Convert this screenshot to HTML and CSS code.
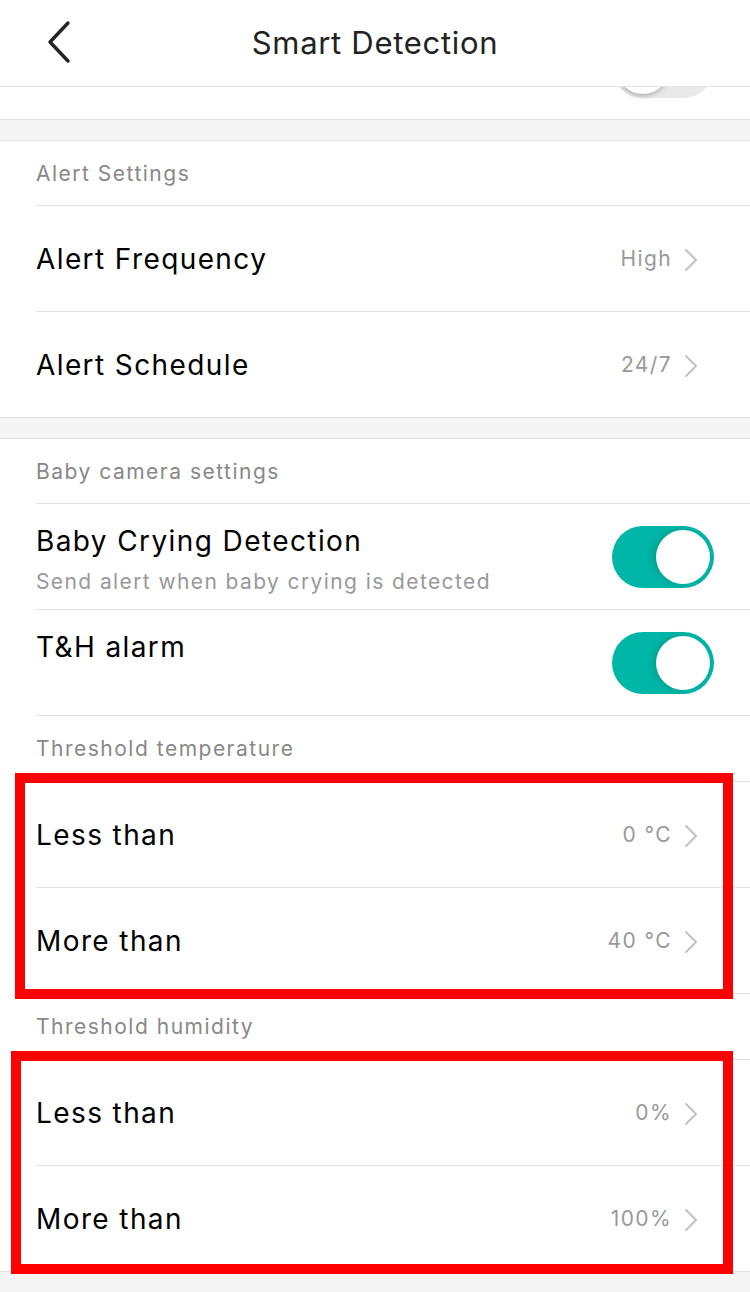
FILE: index.html
```html
<!DOCTYPE html>
<html lang="en">
  <head>
    <meta charset="UTF-8" />
    <meta name="viewport" content="width=device-width, initial-scale=1.0" />
    <title>Smart Detection</title>
    <link rel="stylesheet" href="styles.css">
  </head>
  <body>
    <div class="page">
      <header class="nav">
        <button class="back" aria-label="Back">
          <svg width="28" height="44" viewBox="0 0 28 44">
            <path d="M24 3 L6 22 L24 41" fill="none" stroke="#222" stroke-width="3.4" stroke-linecap="round" stroke-linejoin="round" />
          </svg>
        </button>
        <h1 class="nav-title">Smart Detection</h1>
      </header>

      <div class="cut-row">
        <span class="switch off"><span class="knob"></span></span>
      </div>

      <div class="spacer"></div>

      <section class="group">
        <div class="group-title">Alert Settings</div>
        <div class="item">
          <span class="label">Alert Frequency</span>
          <span class="value">High</span>
          <svg class="chev" width="14" height="24" viewBox="0 0 14 24"><path d="M2 2 L12 12 L2 22" /></svg>
        </div>
        <div class="item">
          <span class="label">Alert Schedule</span>
          <span class="value">24/7</span>
          <svg class="chev" width="14" height="24" viewBox="0 0 14 24"><path d="M2 2 L12 12 L2 22" /></svg>
        </div>
      </section>

      <div class="spacer"></div>

      <section class="group">
        <div class="group-title">Baby camera settings</div>
        <div class="item toggle-item">
          <div class="text">
            <div class="label">Baby Crying Detection</div>
            <div class="desc">Send alert when baby crying is detected</div>
          </div>
          <span class="switch on"><span class="knob"></span></span>
        </div>
        <div class="item toggle-item">
          <div class="text">
            <div class="label">T&amp;H alarm</div>
            <div class="desc"></div>
          </div>
          <span class="switch on"><span class="knob"></span></span>
        </div>

        <div class="group-title sub">Threshold temperature</div>
        <div class="item">
          <span class="label">Less than</span>
          <span class="value">0 °C</span>
          <svg class="chev" width="14" height="24" viewBox="0 0 14 24"><path d="M2 2 L12 12 L2 22" /></svg>
        </div>
        <div class="item">
          <span class="label">More than</span>
          <span class="value">40 °C</span>
          <svg class="chev" width="14" height="24" viewBox="0 0 14 24"><path d="M2 2 L12 12 L2 22" /></svg>
        </div>

        <div class="group-title sub">Threshold humidity</div>
        <div class="item">
          <span class="label">Less than</span>
          <span class="value">0%</span>
          <svg class="chev" width="14" height="24" viewBox="0 0 14 24"><path d="M2 2 L12 12 L2 22" /></svg>
        </div>
        <div class="item">
          <span class="label">More than</span>
          <span class="value">100%</span>
          <svg class="chev" width="14" height="24" viewBox="0 0 14 24"><path d="M2 2 L12 12 L2 22" /></svg>
        </div>
      </section>

      <div class="mark mark-temp"></div>
      <div class="mark mark-hum"></div>
    </div>
  </body>
</html>
```

FILE: styles.css
```css
body {
  margin: 0;
  padding: 0;
  background-color: #f5f5f5;
  font-family: Inter, "Liberation Sans", Arial, sans-serif;
  color: #000;
}

.page {
  position: relative;
  width: 750px;
  min-height: 1292px;
  overflow: hidden;
}

/* top bar */

.nav {
  position: relative;
  z-index: 2;
  height: 86px;
  background-color: white;
  border-bottom: 1px solid #e3e3e3;
  display: flex;
  align-items: center;
  justify-content: center;
}

.back {
  position: absolute;
  left: 44px;
  top: 20px;
  padding: 0;
  border: none;
  background: none;
}

.nav-title {
  margin: 0 0 2px 0;
  font-size: 31px;
  font-weight: 400;
  color: #222;
  letter-spacing: 0.7px;
}

/* the row scrolled under the bar */

.cut-row {
  height: 32px;
  background-color: white;
  border-bottom: 1px solid #e3e3e3;
  display: flex;
  justify-content: flex-end;
  align-items: flex-start;
  padding-right: 36px;
}

.cut-row .switch {
  margin-top: -51px;
}

.spacer {
  height: 20px;
}

/* groups */

.group {
  background-color: white;
  border-top: 1px solid #e3e3e3;
  border-bottom: 1px solid #e3e3e3;
  padding-left: 36px;
}

.group-title {
  height: 64px;
  display: flex;
  align-items: center;
  font-size: 21px;
  color: #888;
  letter-spacing: 1.5px;
}

.group-title.sub {
  height: 65px;
  border-top: 1px solid #e3e3e3;
}

.item {
  height: 105px;
  border-top: 1px solid #e3e3e3;
  display: flex;
  align-items: center;
  padding-right: 52px;
}

.label {
  flex: 1;
  font-size: 28px;
  color: #000;
  letter-spacing: 1.4px;
}

.value {
  font-size: 21px;
  color: #999;
  margin-right: 12px;
  letter-spacing: 1.4px;
}

.chev {
  margin-top: 2px;
}

.chev path {
  fill: none;
  stroke: #c2c2c2;
  stroke-width: 2;
  stroke-linecap: round;
  stroke-linejoin: round;
}

/* toggles */

.toggle-item {
  align-items: center;
  padding-right: 36px;
}

.toggle-item .text {
  flex: 1;
  align-self: flex-start;
  padding-top: 20px;
}

.toggle-item .label {
  line-height: 34px;
}

.desc {
  font-size: 21px;
  color: #999;
  line-height: 30px;
  margin-top: 9px;
  letter-spacing: 1.4px;
}

.switch {
  position: relative;
  display: inline-block;
  width: 102px;
  height: 62px;
  border-radius: 31px;
  flex-shrink: 0;
}

.switch .knob {
  position: absolute;
  top: 4px;
  width: 54px;
  height: 54px;
  border-radius: 50%;
  background-color: white;
}

.switch.on {
  background-color: #00b6a7;
}

.switch.on .knob {
  right: 4px;
  box-shadow: -3px 0 6px rgba(0, 90, 80, 0.25);
}

.switch.off {
  background-color: #e9e9e9;
}

.switch.off .knob {
  left: 4px;
  box-shadow: 0 2px 5px rgba(0, 0, 0, 0.25);
}

/* red annotation boxes */

.mark {
  position: absolute;
  border: 10px solid #ff0000;
  box-sizing: border-box;
}

.mark-temp {
  left: 15px;
  top: 773px;
  width: 718px;
  height: 226px;
}

.mark-hum {
  left: 11px;
  top: 1051px;
  width: 722px;
  height: 223px;
}
```
